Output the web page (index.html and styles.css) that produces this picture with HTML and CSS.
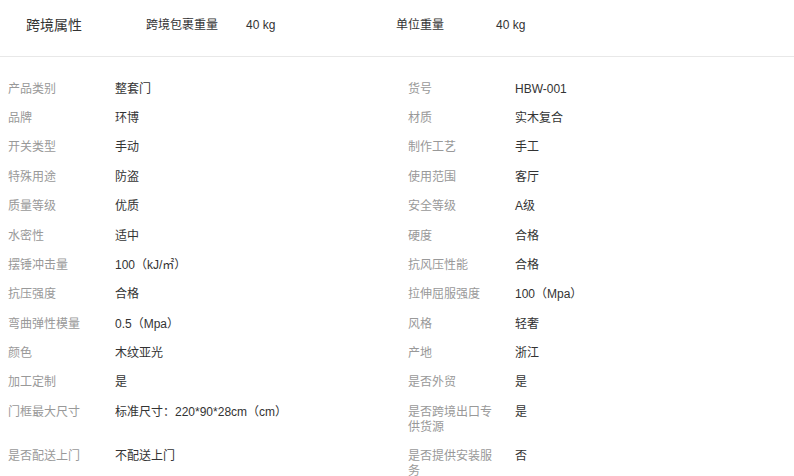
FILE: index.html
```html
<!DOCTYPE html>
<html lang="zh-CN">
<head>
<meta charset="utf-8">
<link rel="stylesheet" href="styles.css">
</head>
<body>
<div class="page">
  <div class="cross">
    <div class="cross-title">跨境属性</div>
    <div class="cross-pair"><span class="cross-label">跨境包裹重量</span><span class="cross-value">40 kg</span></div>
    <div class="cross-pair"><span class="cross-label">单位重量</span><span class="cross-value">40 kg</span></div>
  </div>
  <div class="attrs">
    <div class="attr"><div class="k">产品类别</div><div class="v">整套门</div></div>
    <div class="attr"><div class="k">货号</div><div class="v">HBW-001</div></div>
    <div class="attr"><div class="k">品牌</div><div class="v">环博</div></div>
    <div class="attr"><div class="k">材质</div><div class="v">实木复合</div></div>
    <div class="attr"><div class="k">开关类型</div><div class="v">手动</div></div>
    <div class="attr"><div class="k">制作工艺</div><div class="v">手工</div></div>
    <div class="attr"><div class="k">特殊用途</div><div class="v">防盗</div></div>
    <div class="attr"><div class="k">使用范围</div><div class="v">客厅</div></div>
    <div class="attr"><div class="k">质量等级</div><div class="v">优质</div></div>
    <div class="attr"><div class="k">安全等级</div><div class="v">A级</div></div>
    <div class="attr"><div class="k">水密性</div><div class="v">适中</div></div>
    <div class="attr"><div class="k">硬度</div><div class="v">合格</div></div>
    <div class="attr"><div class="k">摆锤冲击量</div><div class="v">100（kJ/㎡）</div></div>
    <div class="attr"><div class="k">抗风压性能</div><div class="v">合格</div></div>
    <div class="attr"><div class="k">抗压强度</div><div class="v">合格</div></div>
    <div class="attr"><div class="k">拉伸屈服强度</div><div class="v">100（Mpa）</div></div>
    <div class="attr"><div class="k">弯曲弹性模量</div><div class="v">0.5（Mpa）</div></div>
    <div class="attr"><div class="k">风格</div><div class="v">轻奢</div></div>
    <div class="attr"><div class="k">颜色</div><div class="v">木纹亚光</div></div>
    <div class="attr"><div class="k">产地</div><div class="v">浙江</div></div>
    <div class="attr"><div class="k">加工定制</div><div class="v">是</div></div>
    <div class="attr"><div class="k">是否外贸</div><div class="v">是</div></div>
    <div class="attr"><div class="k">门框最大尺寸</div><div class="v">标准尺寸：220*90*28cm（cm）</div></div>
    <div class="attr"><div class="k">是否跨境出口专供货源</div><div class="v">是</div></div>
    <div class="attr"><div class="k">是否配送上门</div><div class="v">不配送上门</div></div>
    <div class="attr"><div class="k">是否提供安装服务</div><div class="v">否</div></div>
  </div>
</div>
</body>
</html>
```

FILE: styles.css
```css
html, body {
  margin: 0;
  padding: 0;
  background: #fff;
}
body {
  font-family: "Liberation Sans", Arial, "Noto Sans CJK SC", sans-serif;
  color: #333;
  overflow: hidden;
}
.page {
  width: 794px;
}
.cross {
  display: flex;
  align-items: flex-start;
  height: 57px;
  box-sizing: border-box;
  padding: 17px 0 0 26px;
  border-bottom: 1px solid #e8e8e8;
}
.cross-title {
  width: 120px;
  font-size: 14px;
  line-height: 16px;
  color: #333;
}
.cross-pair {
  display: flex;
  width: 250px;
  font-size: 12px;
  line-height: 16px;
}
.cross-label {
  width: 100px;
  color: #333;
}
.cross-value {
  color: #333;
}
.attrs {
  display: grid;
  grid-template-columns: 400px 1fr;
  padding: 17.5px 0 0 8px;
}
.attr {
  display: flex;
  font-size: 12px;
  line-height: 15px;
  padding: 7.2px 0;
}
.k {
  width: 91px;
  flex: none;
  margin-right: 16px;
  color: #999;
}
.v {
  color: #333;
}
```
